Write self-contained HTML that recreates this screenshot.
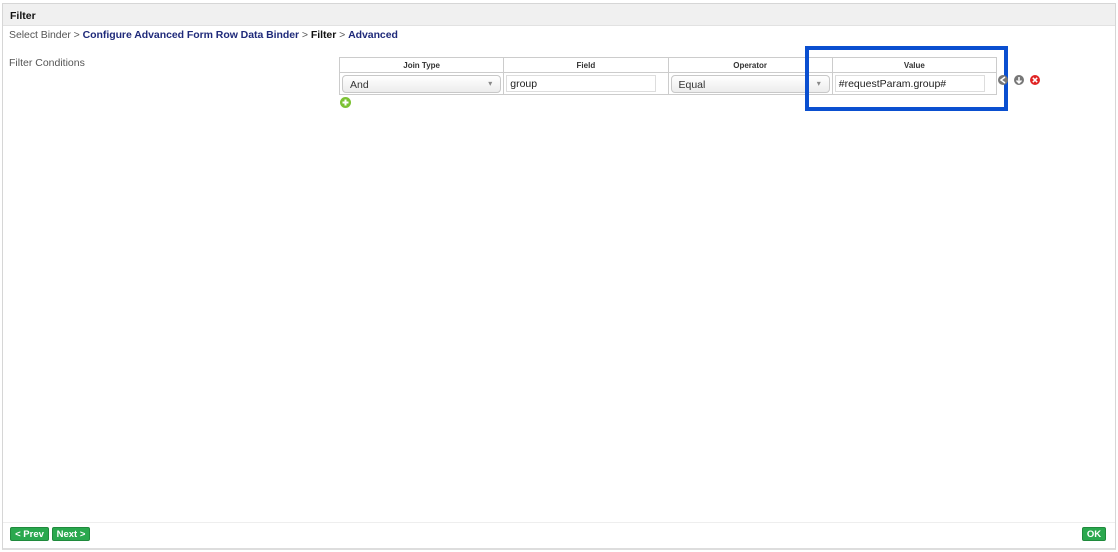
<!DOCTYPE html>
<html><head><style>
*{box-sizing:border-box;margin:0;padding:0}
body{width:1118px;height:552px;background:#fff;font-family:"Liberation Sans",Arial,sans-serif;position:relative;overflow:hidden}
.frame{position:absolute;left:2px;top:3px;width:1114px;height:547px;border:1px solid #d6d6d6;border-bottom:2px solid #ddd}
.hdr{position:absolute;left:0;top:0;width:100%;height:22px;background:#f0f0f0;border-bottom:1px solid #e2e2e2;font-size:10.5px;font-weight:bold;color:#111;padding:6px 0 0 7px}
.crumb{position:absolute;left:9px;top:29px;font-size:10.5px;color:#555;letter-spacing:-0.05px}
.crumb b{color:#1f2a7a}
.crumb b.k{color:#111}
.lbl{position:absolute;left:9px;top:57px;font-size:10.5px;color:#555}
table{position:absolute;left:339px;top:57px;border-collapse:collapse;width:658px}
th{border:1px solid #ccc;height:15px;font-size:8px;font-weight:bold;color:#333;text-align:center;width:164px;background:#fff}
td{border:1px solid #ccc;height:22px;padding:0 2px}
.sel{height:18px;border:1px solid #c8c8c8;border-radius:4px;background:linear-gradient(#fff,#ececec);font-size:10.5px;color:#333;padding:3px 0 0 7px;position:relative}
.sel:after{content:"▾";position:absolute;right:8px;top:3px;font-size:8px;color:#888}
.inp{height:17px;border:1px solid #ddd;font-size:10.5px;color:#222;padding:2px 0 0 3px;width:150px}
.box{position:absolute;left:805px;top:46px;width:203px;height:65px;border:4px solid #0a4fd0}
.btn{position:absolute;top:527px;height:14px;background:#2aa84e;color:#fff;font-size:9.5px;font-weight:bold;border-radius:2px;padding:1px 0;border:1px solid #1f8a3c;text-align:center}
.foot{position:absolute;left:0;top:518px;width:100%;border-top:1px solid #eee}
</style></head><body>
<div class="frame"><div class="hdr">Filter</div><div class="foot"></div></div>
<div class="crumb">Select Binder &gt; <b>Configure Advanced Form Row Data Binder</b> &gt; <b class="k">Filter</b> &gt; <b>Advanced</b></div>
<div class="lbl">Filter Conditions</div>
<table><tr><th>Join Type</th><th>Field</th><th>Operator</th><th>Value</th></tr>
<tr><td><div class="sel">And</div></td><td><div class="inp">group</div></td><td><div class="sel">Equal</div></td><td><div class="inp">#requestParam.group#</div></td></tr></table>
<div class="box"></div>
<svg style="position:absolute;left:997px;top:74px" width="46" height="14">
<circle cx="6" cy="6" r="5" fill="#777"/><path d="M8 3 L4 6 L8 9" stroke="#fff" stroke-width="1.5" fill="none"/>
<circle cx="22" cy="6" r="5" fill="#777"/><path d="M22 3 V9 M19.5 6.5 L22 9 L24.5 6.5" stroke="#fff" stroke-width="1.5" fill="none"/>
<circle cx="38" cy="6" r="5" fill="#e02424"/><path d="M35.8 3.8 L40.2 8.2 M40.2 3.8 L35.8 8.2" stroke="#fff" stroke-width="1.5"/>
</svg>
<svg style="position:absolute;left:339px;top:96px" width="13" height="13"><circle cx="6.5" cy="6.5" r="5.5" fill="#7cc234"/><path d="M6.5 3.5V9.5M3.5 6.5H9.5" stroke="#fff" stroke-width="2"/></svg>
<div class="btn" style="left:10px;width:39px">&lt; Prev</div>
<div class="btn" style="left:52px;width:38px">Next &gt;</div>
<div class="btn" style="left:1082px;width:24px">OK</div>
</body></html>
